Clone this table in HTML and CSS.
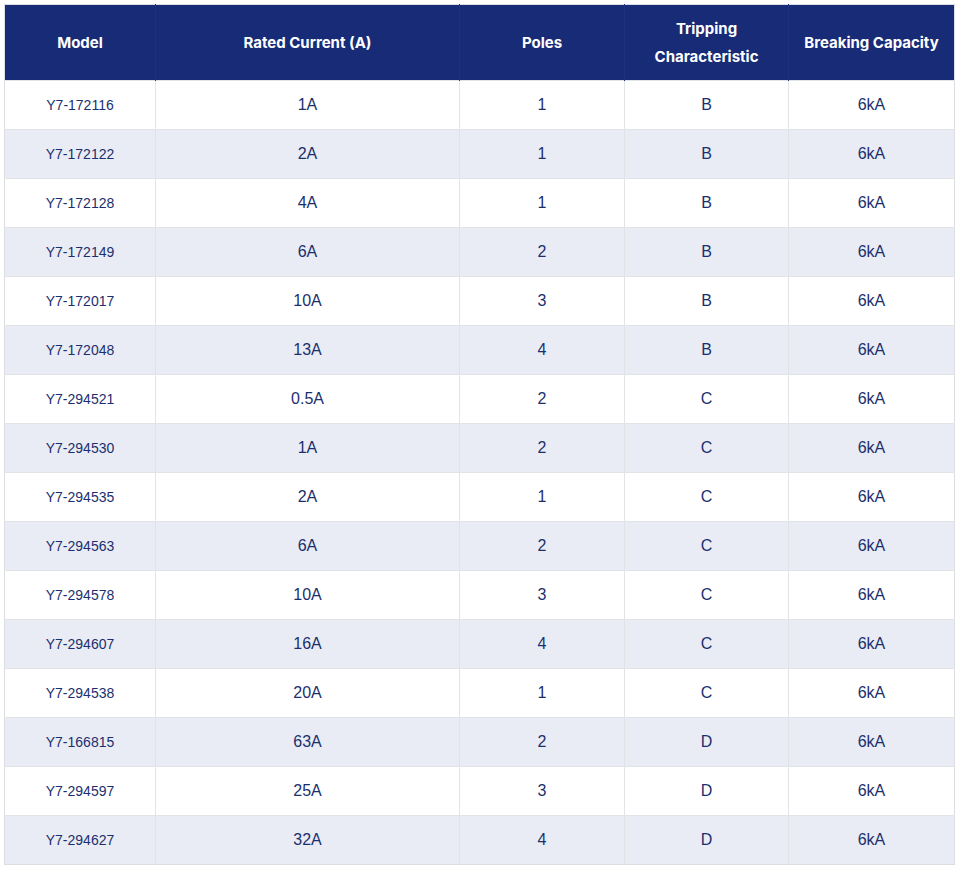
FILE: index.html
```html
<!DOCTYPE html>
<html>
<head>
<meta charset="utf-8">
<link rel="stylesheet" href="styles.css">
</head>
<body>
<div class="wrap">
<table class="spec">
<colgroup>
<col class="c-model"><col class="c-current"><col class="c-poles"><col class="c-trip"><col class="c-break">
</colgroup>
<thead>
<tr><th>Model</th><th>Rated Current (A)</th><th>Poles</th><th>Tripping<br>Characteristic</th><th>Breaking Capacity</th></tr>
</thead>
<tbody>
<tr><td class="model">Y7-172116</td><td>1A</td><td>1</td><td>B</td><td>6kA</td></tr>
<tr><td class="model">Y7-172122</td><td>2A</td><td>1</td><td>B</td><td>6kA</td></tr>
<tr><td class="model">Y7-172128</td><td>4A</td><td>1</td><td>B</td><td>6kA</td></tr>
<tr><td class="model">Y7-172149</td><td>6A</td><td>2</td><td>B</td><td>6kA</td></tr>
<tr><td class="model">Y7-172017</td><td>10A</td><td>3</td><td>B</td><td>6kA</td></tr>
<tr><td class="model">Y7-172048</td><td>13A</td><td>4</td><td>B</td><td>6kA</td></tr>
<tr><td class="model">Y7-294521</td><td>0.5A</td><td>2</td><td>C</td><td>6kA</td></tr>
<tr><td class="model">Y7-294530</td><td>1A</td><td>2</td><td>C</td><td>6kA</td></tr>
<tr><td class="model">Y7-294535</td><td>2A</td><td>1</td><td>C</td><td>6kA</td></tr>
<tr><td class="model">Y7-294563</td><td>6A</td><td>2</td><td>C</td><td>6kA</td></tr>
<tr><td class="model">Y7-294578</td><td>10A</td><td>3</td><td>C</td><td>6kA</td></tr>
<tr><td class="model">Y7-294607</td><td>16A</td><td>4</td><td>C</td><td>6kA</td></tr>
<tr><td class="model">Y7-294538</td><td>20A</td><td>1</td><td>C</td><td>6kA</td></tr>
<tr><td class="model">Y7-166815</td><td>63A</td><td>2</td><td>D</td><td>6kA</td></tr>
<tr><td class="model">Y7-294597</td><td>25A</td><td>3</td><td>D</td><td>6kA</td></tr>
<tr><td class="model">Y7-294627</td><td>32A</td><td>4</td><td>D</td><td>6kA</td></tr>
</tbody>
</table>
</div>
</body>
</html>
```

FILE: styles.css
```css
html, body {
  margin: 0;
  padding: 0;
  background: #ffffff;
}
.wrap {
  padding: 4px;
}
.spec {
  width: 950px;
  border-collapse: collapse;
  table-layout: fixed;
  border: 1px solid #dcdde2;
  font-family: "Liberation Sans", Arial, sans-serif;
  color: #1b2f6e;
}
.c-model { width: 151px; }
.c-current { width: 304px; }
.c-poles { width: 165px; }
.c-trip { width: 164px; }
.c-break { width: 166px; }
.spec th {
  background: #172b77;
  color: #ffffff;
  font-family: Inter, "Open Sans", sans-serif;
  font-weight: 700;
  font-size: 15px;
  line-height: 28px;
  height: 75px;
  padding: 0;
  text-align: center;
  vertical-align: middle;
  border-left: 1px solid #1d3280;
}
.spec th:first-child { border-left: none; }
.spec td {
  height: 48px;
  padding: 0;
  text-align: center;
  vertical-align: middle;
  font-size: 16px;
  border-left: 1px solid #e2e3e7;
  border-top: 1px solid #e2e3e7;
}
.spec td.model {
  font-size: 14px;
  border-left: none;
}
.spec tbody tr:nth-child(even) td {
  background: #e9ecf4;
}
```
